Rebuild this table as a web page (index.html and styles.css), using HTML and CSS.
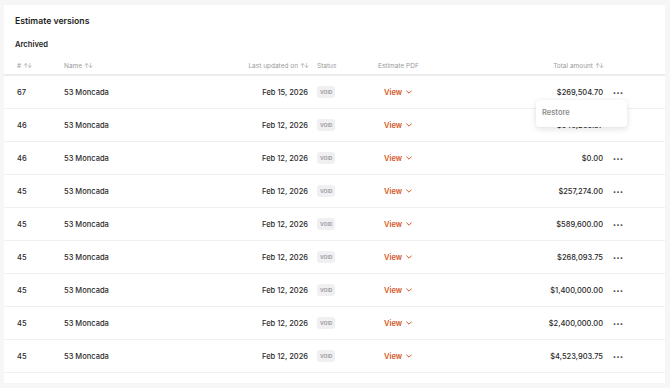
FILE: index.html
```html
<!DOCTYPE html>
<html>
<head>
<meta charset="utf-8">
<link rel="stylesheet" href="styles.css">
</head>
<body>
<div class="card">
  <h1 class="title">Estimate versions</h1>
  <h2 class="subtitle">Archived</h2>
  <div class="table">
    <div class="row head">
      <div class="c-num">#<span class="sort">↑↓</span></div>
      <div class="c-name">Name<span class="sort">↑↓</span></div>
      <div class="c-date">Last updated on<span class="sort">↑↓</span></div>
      <div class="c-status">Status</div>
      <div class="c-pdf">Estimate PDF</div>
      <div class="c-total">Total amount<span class="sort">↑↓</span></div>
      <div class="c-act"></div>
    </div>
    <div class="row">
      <div class="c-num">67</div><div class="c-name">53 Moncada</div><div class="c-date">Feb 15, 2026</div>
      <div class="c-status"><span class="badge">VOID</span></div>
      <div class="c-pdf"><span class="view">View<svg class="chev" viewBox="0 0 10 6" width="6" height="4"><path d="M1 1l4 4 4-4" fill="none" stroke="currentColor" stroke-width="1.6" stroke-linecap="round" stroke-linejoin="round"/></svg></span></div>
      <div class="c-total">$269,504.70</div>
      <div class="c-act"><span class="dots">•••</span><div class="menu">Restore</div></div>
    </div>
    <div class="row">
      <div class="c-num">46</div><div class="c-name">53 Moncada</div><div class="c-date">Feb 12, 2026</div>
      <div class="c-status"><span class="badge">VOID</span></div>
      <div class="c-pdf"><span class="view">View<svg class="chev" viewBox="0 0 10 6" width="6" height="4"><path d="M1 1l4 4 4-4" fill="none" stroke="currentColor" stroke-width="1.6" stroke-linecap="round" stroke-linejoin="round"/></svg></span></div>
      <div class="c-total">$340,265.57</div>
      <div class="c-act"><span class="dots">•••</span></div>
    </div>
    <div class="row">
      <div class="c-num">46</div><div class="c-name">53 Moncada</div><div class="c-date">Feb 12, 2026</div>
      <div class="c-status"><span class="badge">VOID</span></div>
      <div class="c-pdf"><span class="view">View<svg class="chev" viewBox="0 0 10 6" width="6" height="4"><path d="M1 1l4 4 4-4" fill="none" stroke="currentColor" stroke-width="1.6" stroke-linecap="round" stroke-linejoin="round"/></svg></span></div>
      <div class="c-total">$0.00</div>
      <div class="c-act"><span class="dots">•••</span></div>
    </div>
    <div class="row">
      <div class="c-num">45</div><div class="c-name">53 Moncada</div><div class="c-date">Feb 12, 2026</div>
      <div class="c-status"><span class="badge">VOID</span></div>
      <div class="c-pdf"><span class="view">View<svg class="chev" viewBox="0 0 10 6" width="6" height="4"><path d="M1 1l4 4 4-4" fill="none" stroke="currentColor" stroke-width="1.6" stroke-linecap="round" stroke-linejoin="round"/></svg></span></div>
      <div class="c-total">$257,274.00</div>
      <div class="c-act"><span class="dots">•••</span></div>
    </div>
    <div class="row">
      <div class="c-num">45</div><div class="c-name">53 Moncada</div><div class="c-date">Feb 12, 2026</div>
      <div class="c-status"><span class="badge">VOID</span></div>
      <div class="c-pdf"><span class="view">View<svg class="chev" viewBox="0 0 10 6" width="6" height="4"><path d="M1 1l4 4 4-4" fill="none" stroke="currentColor" stroke-width="1.6" stroke-linecap="round" stroke-linejoin="round"/></svg></span></div>
      <div class="c-total">$589,600.00</div>
      <div class="c-act"><span class="dots">•••</span></div>
    </div>
    <div class="row">
      <div class="c-num">45</div><div class="c-name">53 Moncada</div><div class="c-date">Feb 12, 2026</div>
      <div class="c-status"><span class="badge">VOID</span></div>
      <div class="c-pdf"><span class="view">View<svg class="chev" viewBox="0 0 10 6" width="6" height="4"><path d="M1 1l4 4 4-4" fill="none" stroke="currentColor" stroke-width="1.6" stroke-linecap="round" stroke-linejoin="round"/></svg></span></div>
      <div class="c-total">$268,093.75</div>
      <div class="c-act"><span class="dots">•••</span></div>
    </div>
    <div class="row">
      <div class="c-num">45</div><div class="c-name">53 Moncada</div><div class="c-date">Feb 12, 2026</div>
      <div class="c-status"><span class="badge">VOID</span></div>
      <div class="c-pdf"><span class="view">View<svg class="chev" viewBox="0 0 10 6" width="6" height="4"><path d="M1 1l4 4 4-4" fill="none" stroke="currentColor" stroke-width="1.6" stroke-linecap="round" stroke-linejoin="round"/></svg></span></div>
      <div class="c-total">$1,400,000.00</div>
      <div class="c-act"><span class="dots">•••</span></div>
    </div>
    <div class="row">
      <div class="c-num">45</div><div class="c-name">53 Moncada</div><div class="c-date">Feb 12, 2026</div>
      <div class="c-status"><span class="badge">VOID</span></div>
      <div class="c-pdf"><span class="view">View<svg class="chev" viewBox="0 0 10 6" width="6" height="4"><path d="M1 1l4 4 4-4" fill="none" stroke="currentColor" stroke-width="1.6" stroke-linecap="round" stroke-linejoin="round"/></svg></span></div>
      <div class="c-total">$2,400,000.00</div>
      <div class="c-act"><span class="dots">•••</span></div>
    </div>
    <div class="row">
      <div class="c-num">45</div><div class="c-name">53 Moncada</div><div class="c-date">Feb 12, 2026</div>
      <div class="c-status"><span class="badge">VOID</span></div>
      <div class="c-pdf"><span class="view">View<svg class="chev" viewBox="0 0 10 6" width="6" height="4"><path d="M1 1l4 4 4-4" fill="none" stroke="currentColor" stroke-width="1.6" stroke-linecap="round" stroke-linejoin="round"/></svg></span></div>
      <div class="c-total">$4,523,903.75</div>
      <div class="c-act"><span class="dots">•••</span></div>
    </div>
  </div>
</div>
</body>
</html>
```
FILE: styles.css
```css
* { box-sizing: border-box; }
html, body { margin: 0; padding: 0; }
body {
  background: #f6f6f6;
  font-family: Inter, "Noto Sans", sans-serif;
  color: #222;
  width: 670px;
  height: 388px;
  overflow: hidden;
  padding: 5px 5px 5px 4px;
}
.card {
  background: #fff;
  width: 661px;
  height: 378px;
  padding-top: 6px;
}
.title {
  margin: 0;
  padding-left: 11px;
  font-size: 8.7px;
  line-height: 20px;
  font-weight: 600;
  color: #1e1e1e;
}
.subtitle {
  margin: 6px 0 0;
  padding-left: 11px;
  font-size: 7.6px;
  line-height: 16px;
  font-weight: 600;
  color: #1e1e1e;
}
.row {
  display: grid;
  grid-template-columns: 47px 146px 98px 70px 112px 113px 1fr;
  align-items: center;
  height: 33px;
  padding-left: 13px;
  border-bottom: 1px solid #f0f0f0;
  font-size: 7.5px;
  font-weight: 500;
  color: #2a2a2a;
}
.row.head {
  height: 23px;
  padding-top: 5px;
  border-bottom: 2px solid #ececec;
  font-size: 6.5px;
  font-weight: 400;
  color: #9a9a9a;
}
.sort { margin-left: 2px; letter-spacing: -1px; font-size: 6px; }
.c-date, .c-total { text-align: right; }
.c-status, .c-act { padding-left: 10px; }
.head .c-status { padding-left: 9px; }
.c-pdf { padding-left: 6px; }
.head .c-pdf { padding-left: 0; }
.badge {
  display: inline-block;
  background: #f0f0f2;
  color: #a0a0a6;
  font-size: 5px;
  font-weight: 700;
  padding: 3px 3px;
  border-radius: 3px;
  line-height: 6px;
  margin-left: -1px;
}
.view {
  color: #d4561c;
  font-weight: 600;
  display: inline-flex;
  align-items: center;
}
.chev { margin-left: 4px; }
.c-act { position: relative; }
.dots { color: #444; font-size: 5.5px; letter-spacing: 0.6px; }
.menu {
  position: absolute;
  top: 12px;
  left: -67px;
  width: 91px;
  height: 27px;
  background: #fff;
  border-radius: 3px;
  box-shadow: 0 2px 6px rgba(0,0,0,0.12), 0 0 1px rgba(0,0,0,0.1);
  padding: 8px 6px;
  font-size: 7.5px;
  font-weight: 600;
  color: #8e8e8e;
  z-index: 2;
}
```
